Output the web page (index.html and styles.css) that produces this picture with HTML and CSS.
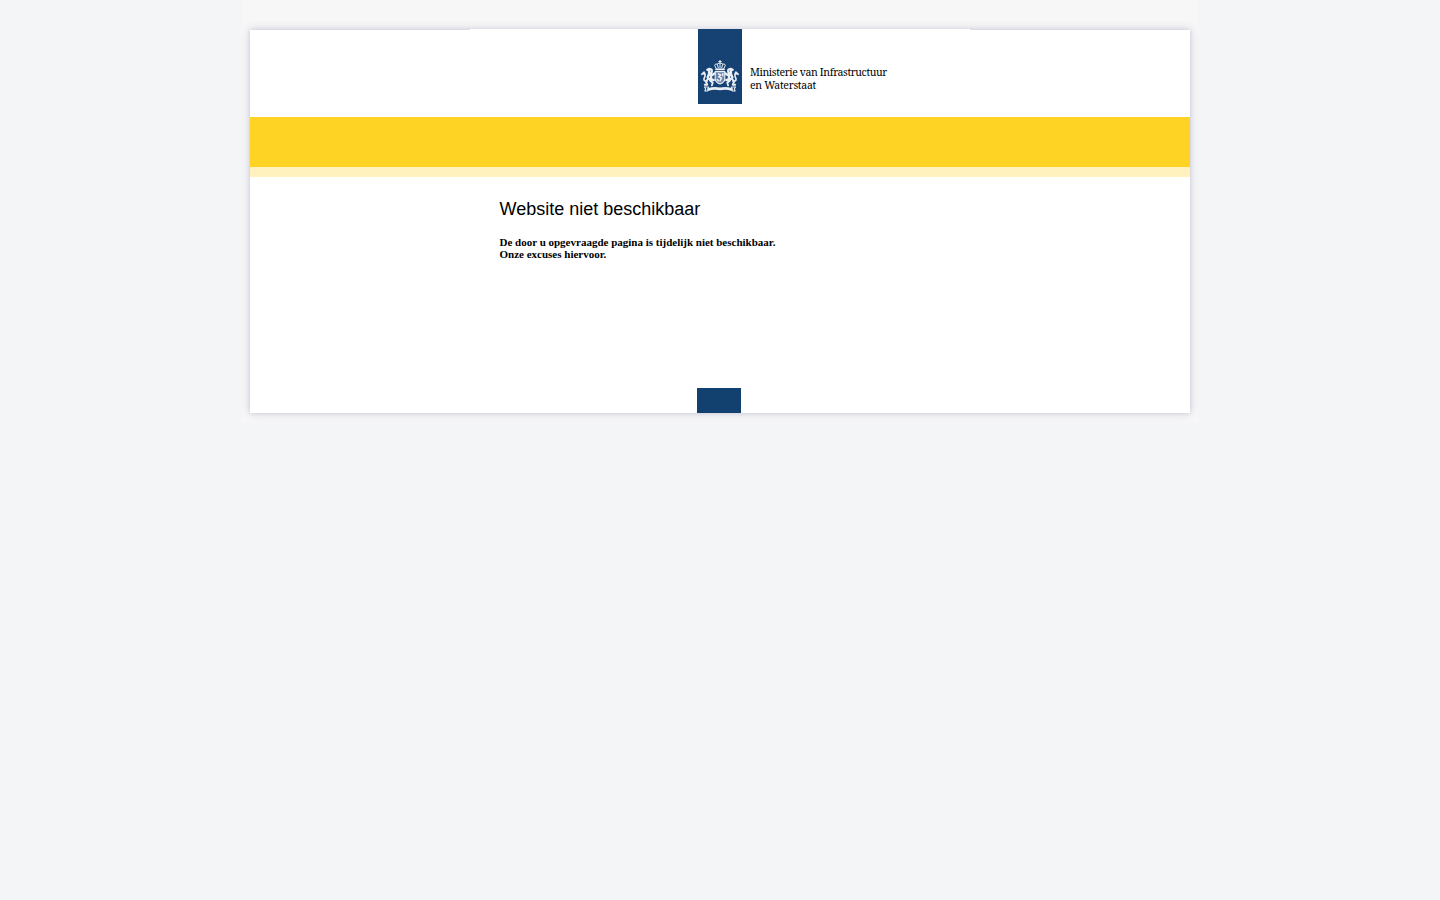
FILE: index.html
```html
<!DOCTYPE html>
<html lang="nl">
<head>
<meta charset="utf-8">
<title>Website niet beschikbaar</title>
<link rel="stylesheet" href="styles.css">
</head>
<body>
<div class="wrapper">
  <div class="page">
    <header class="header">
      <div class="brand">
        <svg class="logo" width="44" height="75" viewBox="0 0 44 75" aria-hidden="true">
          <rect width="44" height="75" fill="#154273"/>
          <g transform="translate(0 27)" fill="none" stroke="#e9eff5" stroke-width="1.3" stroke-linecap="round" stroke-linejoin="round">
            <path d="M22 4.400v2.200M20.800 5.500h2.400" stroke-width="1"/>
            <path d="M18.300 12.700 16.700 9.500Q17 7.400 19.300 8Q22 5.600 24.700 8Q27 7.400 27.300 9.500L25.700 12.700M22 7v5M19.400 8.500l.9 3.500M24.600 8.500l-.9 3.500" stroke-width="1"/>
            <path d="M18 13.300h8" stroke-width="1.800"/>
            <path d="M17.200 15.700h9.600v7.300q0 3-4.800 5q-4.800-2-4.800-5z" fill="#6884a4" stroke-width="1.200"/>
            <path d="M20.500 17.800l2.300 1.200-2 1.800 2.800 1.300-1.600 2.900M24.800 17.800v2M19.300 23.500l1 1.200" stroke-width="1.500"/>
            <g>
              <path d="M9.300 13.800 11.500 12.800 13.700 13.800 13.800 15.800 12.200 17.200 14.300 19 16.500 17.500M11 14.500v3.500l-1.400 3.300 2.800 3 3.300-.3M12.700 19.500l.8 3.500" stroke-width="2.300"/>
              <path d="M9.700 23 8 25.800l1.300 2.900H6.800M12.500 25l2.200 1.800-.8 2.500" stroke-width="1.900"/>
              <path d="M9 25.300Q4.500 25 6.500 21.500 8 18.600 5.800 17.700M3.800 18.300l2.300-2.200 1 2.200" stroke-width="1.600"/>
            </g>
            <g transform="matrix(-1 0 0 1 44 0)">
              <path d="M9.300 13.800 11.500 12.800 13.700 13.800 13.800 15.800 12.200 17.200 14.300 19 16.500 17.500M11 14.500v3.500l-1.400 3.300 2.800 3 3.300-.3M12.700 19.500l.8 3.500" stroke-width="2.300"/>
              <path d="M9.700 23 8 25.800l1.300 2.900H6.800M12.500 25l2.200 1.800-.8 2.500" stroke-width="1.900"/>
              <path d="M9 25.300Q4.500 25 6.500 21.500 8 18.600 5.800 17.700M3.800 18.300l2.300-2.200 1 2.200" stroke-width="1.600"/>
            </g>
            <path d="M6.500 31h4l-.8 4H6.900l.8-2zM37.500 31h-4l.8 4h2.800l-.8-2z" stroke-width="1.100"/>
            <path d="M10.500 33.400Q16 31.600 22 32.900Q28 31.600 33.500 33.400" stroke-width="2.700"/>
          </g>
        </svg>
        <p class="ministry"><span class="line-one">Ministerie van Infrastructuur</span><br><span class="line-two">en Waterstaat</span></p>
      </div>
    </header>
    <div class="bar"></div>
    <div class="subbar"></div>
    <main class="content">
      <h1 class="title">Website niet beschikbaar</h1>
      <p class="message">De door u opgevraagde pagina is tijdelijk niet beschikbaar.<br>Onze excuses hiervoor.</p>
    </main>
    <div class="footer-block"></div>
  </div>
</div>
</body>
</html>
```
FILE: styles.css
```css
body {
  margin: 0;
  background: #f3f5f7;
  color: #000;
}

.wrapper {
  box-sizing: border-box;
  width: 956px;
  height: 422px;
  margin: 0 auto;
  padding: 30px 8px 9px;
  overflow: hidden;
  background: linear-gradient(#f7f7f7 0 26px, #f7f7f9 26px);
}

.page {
  display: flex;
  flex-direction: column;
  height: 383px;
  background: #fff;
  box-shadow: 0 0 4px #c9cbd4, 0 0 10px #d6d3e0;
}

.header {
  display: flex;
  justify-content: center;
  height: 87px;
}

.brand {
  box-sizing: border-box;
  display: flex;
  width: 500px;
  height: 88px;
  margin-top: -1px;
  padding-left: 228px;
  background: #fff;
}

.logo {
  flex: none;
}

.ministry {
  margin: 37px 0 0 8px;
  font: 10.5px/13px "Noto Serif", "Liberation Serif", serif;
  white-space: nowrap;
}

.line-one {
  letter-spacing: -0.38px;
}

.line-two {
  letter-spacing: -0.27px;
}

.bar {
  height: 50px;
  background: #ffd323;
}

.subbar {
  height: 10px;
  background: #fff2bf;
}

.content {
  box-sizing: border-box;
  width: 500px;
  height: 211px;
  margin: 0 auto;
  padding: 22px 0 0 29.5px;
}

.title {
  margin: 0;
  font: 18px/20px "Liberation Sans", Arial, sans-serif;
}

.message {
  margin: 17px 0 0;
  font: bold 11px/12px "Liberation Serif", "Times New Roman", serif;
}

.footer-block {
  width: 44px;
  height: 25px;
  margin-left: 447px;
  background: #12406f;
}
```
